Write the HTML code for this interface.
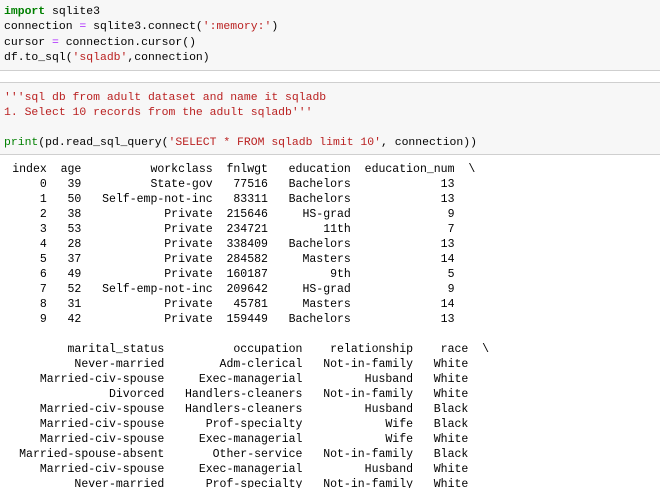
<!DOCTYPE html>
<html><head><meta charset="utf-8"><style>
html,body{margin:0;padding:0;background:#fff;width:660px;height:488px;overflow:hidden;position:relative}
pre{margin:0;font-family:"Liberation Mono",monospace;font-size:11.43px;line-height:15.5px;white-space:pre;position:absolute}
.cell{position:absolute;left:0;width:660px;background:#f7f7f7;border-bottom:1px solid #cfcfcf}
.k{color:#008000;font-weight:bold}.b{color:#008000}.o{color:#aa22ff}.s{color:#ba2121}
</style></head><body>
<div class="cell" style="top:0;height:70px"></div>
<div class="cell" style="top:82px;height:71px;border-top:1px solid #cfcfcf"></div>
<pre style="left:4px;top:3.5px"><span class="k">import</span> sqlite3
connection <span class="o">=</span> sqlite3.connect(<span class="s">':memory:'</span>)
cursor <span class="o">=</span> connection.cursor()
df.to_sql(<span class="s">'sqladb'</span>,connection)</pre>
<pre style="left:4px;top:90px;line-height:15px"><span class="s">'''sql db from adult dataset and name it sqladb
1. Select 10 records from the adult sqladb'''</span>

<span class="b">print</span>(pd.read_sql_query(<span class="s">'SELECT * FROM sqladb limit 10'</span>, connection))</pre>
<pre style="left:-8.5px;top:161.5px;line-height:15px;font-size:11.53px">   index  age          workclass  fnlwgt   education  education_num  \
0      0   39          State-gov   77516   Bachelors             13   
1      1   50   Self-emp-not-inc   83311   Bachelors             13   
2      2   38            Private  215646     HS-grad              9   
3      3   53            Private  234721        11th              7   
4      4   28            Private  338409   Bachelors             13   
5      5   37            Private  284582     Masters             14   
6      6   49            Private  160187         9th              5   
7      7   52   Self-emp-not-inc  209642     HS-grad              9   
8      8   31            Private   45781     Masters             14   
9      9   42            Private  159449   Bachelors             13   

           marital_status          occupation    relationship    race  \
0           Never-married        Adm-clerical   Not-in-family   White   
1      Married-civ-spouse     Exec-managerial         Husband   White   
2                Divorced   Handlers-cleaners   Not-in-family   White   
3      Married-civ-spouse   Handlers-cleaners         Husband   Black   
4      Married-civ-spouse      Prof-specialty            Wife   Black   
5      Married-civ-spouse     Exec-managerial            Wife   White   
6   Married-spouse-absent       Other-service   Not-in-family   Black   
7      Married-civ-spouse     Exec-managerial         Husband   White   
8           Never-married      Prof-specialty   Not-in-family   White   </pre>
</body></html>
